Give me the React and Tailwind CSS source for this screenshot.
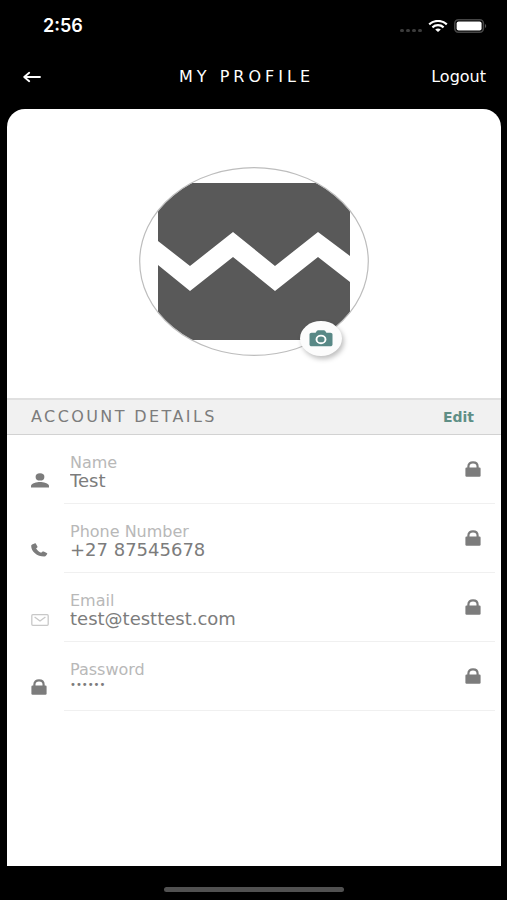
const BackIcon = () => (
  <svg viewBox="0 0 18 12" className="h-3 w-[18px]" fill="none" stroke="currentColor" strokeWidth="1.8" strokeLinecap="round" strokeLinejoin="round">
    <path d="M17 6H1.6M6.2 1.8 1.2 6l5 4.2" />
  </svg>
);

const WifiIcon = () => (
  <svg viewBox="0 0 20 12" className="h-3 w-5" fill="none" stroke="currentColor" strokeWidth="2.2">
    <path d="M1.2 4.4C6.2-.2 13.8-.2 18.8 4.4" />
    <path d="M4.4 7.3c3.2-2.8 8-2.8 11.2 0" />
    <path d="M7.2 9.4c1.6-1.3 4-1.3 5.6 0L10 12z" fill="currentColor" stroke="none" />
  </svg>
);

const BatteryIcon = () => (
  <svg viewBox="0 0 33 14" className="h-[14px] w-[33px]">
    <rect x="0.8" y="0.8" width="28.6" height="12.4" rx="3.6" fill="none" stroke="#454545" strokeWidth="1.6" />
    <rect x="2.6" y="2.4" width="25" height="9.2" rx="2" fill="#fff" />
    <path d="M31 5c1.6.6 1.6 3.4 0 4z" fill="#555" />
  </svg>
);

const PersonIcon = () => (
  <svg viewBox="0 0 18 15" className="h-[15px] w-[18px]" fill="currentColor">
    <ellipse cx="9" cy="3.9" rx="4.4" ry="3.7" />
    <path d="M0 14.6v-1.8C0 10.3 6 9 9 9s9 1.3 9 3.8v1.8z" />
  </svg>
);

const PhoneIcon = () => (
  <svg viewBox="0 0 18 14" className="h-[14px] w-[18px]" fill="currentColor">
    <path d="M1.7 1.3 3.6.4c.5-.2 1-.1 1.3.4l1.5 2.6c.3.5.1.9-.2 1.2l-1.1.9c1.2 1.9 2.8 3.2 5 4.2l1.2-.9c.4-.3.9-.4 1.4-.2l3 1.3c.6.3.8.7.5 1.2l-1.1 1.5c-.4.6-1 .8-1.8.8C6 13.4.2 8.4.2 2.9c0-.8.5-1.2 1.5-1.6z" />
  </svg>
);

const MailIcon = () => (
  <svg viewBox="0 0 18 12" className="h-3 w-[18px] text-[#c8c8c8]" fill="none" stroke="currentColor" strokeWidth="1.3" strokeLinejoin="round">
    <rect x="0.8" y="0.7" width="16.4" height="10.6" rx="1" />
    <path d="m3.6 3 5.4 4 5.4-4" />
  </svg>
);

const LockIcon = () => (
  <svg viewBox="0 0 16 16" className="h-4 w-4" fill="currentColor">
    <path d="M3.4 8V5.6C3.4 2.9 5.3 1.3 8 1.3s4.6 1.6 4.6 4.3V8" fill="none" stroke="currentColor" strokeWidth="2.2" />
    <rect x="0.4" y="6.6" width="15.2" height="9.2" rx="1.2" />
  </svg>
);

const CameraIcon = () => (
  <svg viewBox="0 0 24 17" className="h-[17px] w-6">
    <path d="M2.6 2.7h4l1.3-1.9c.3-.4.7-.6 1.2-.6h5.8c.5 0 .9.2 1.2.6l1.3 1.9h4c1.2 0 2.1.8 2.1 1.8v10c0 1-.9 1.8-2.1 1.8H2.6c-1.2 0-2.1-.8-2.1-1.8v-10c0-1 .9-1.8 2.1-1.8z" fill="#588886" />
    <ellipse cx="12" cy="9.4" rx="4.5" ry="3.8" fill="none" stroke="#fff" strokeWidth="1.9" />
  </svg>
);

const Avatar = () => (
  <svg viewBox="0 0 230 189" className="h-[189px] w-[230px]" role="img" aria-label="Profile picture">
    <defs>
      <clipPath id="avatar-clip">
        <ellipse cx="115" cy="94.5" rx="114" ry="93.5" />
      </clipPath>
    </defs>
    <g clipPath="url(#avatar-clip)" fill="#595959">
      <path d="M19 16h192v73l-32-24-43 34-42-34-43 34-32-25z" />
      <path d="M19 98l32 26 43-34 42 34 43-34 32 25v58H19z" />
    </g>
    <ellipse cx="115" cy="94.5" rx="114.3" ry="93.8" fill="none" stroke="#bdbdbd" strokeWidth="1.2" />
  </svg>
);

const fields = [
  { id: 'name', label: 'Name', value: 'Test', type: 'text', Icon: PersonIcon },
  { id: 'phone', label: 'Phone Number', value: '+27 87545678', type: 'tel', Icon: PhoneIcon },
  { id: 'email', label: 'Email', value: 'test@testtest.com', type: 'email', Icon: MailIcon },
  { id: 'password', label: 'Password', value: '******', type: 'password', Icon: LockIcon },
];

const FieldRow = ({ id, label, value, type, Icon }) => (
  <div className="flex min-h-[69px] pl-6 pr-[6px] text-[#7c7c7c]">
    <div className="flex w-[33px] items-end pb-4">
      <Icon />
    </div>
    <div className="flex flex-1 items-start border-b border-[#f0f0f0] pl-[6px] pr-[14px] pt-5">
      <div className="flex min-w-0 flex-1 flex-col">
        <label htmlFor={id} className="text-base leading-4 text-[#b8b8b8]">
          {label}
        </label>
        <input
          id={id}
          type={type}
          value={value}
          readOnly
          className={`w-full bg-transparent outline-none ${type === 'password' ? 'h-3 text-[10px]' : 'h-5 text-lg'}`}
        />
      </div>
      <span className="pt-[6px]">
        <LockIcon />
      </span>
    </div>
  </div>
);

export default function App() {
  return (
    <div className="flex min-h-screen flex-col bg-black font-['DejaVu_Sans',sans-serif]">
      <div className="flex h-[52px] items-center justify-between pl-[43px] pr-5 text-white">
        <span className="font-['Inter',sans-serif] text-lg font-semibold">2:56</span>
        <div className="flex items-center gap-[6px]">
          <div className="flex gap-[2px] pt-2">
            <span className="h-[3px] w-1 rounded-sm bg-[#3c3c3c]" />
            <span className="h-[3px] w-1 rounded-sm bg-[#3c3c3c]" />
            <span className="h-[3px] w-1 rounded-sm bg-[#3c3c3c]" />
            <span className="h-[3px] w-1 rounded-sm bg-[#3c3c3c]" />
          </div>
          <WifiIcon />
          <BatteryIcon />
        </div>
      </div>

      <header className="grid h-[50px] grid-cols-[1fr_auto_1fr] items-center pl-[23px] pr-[21px] text-white">
        <button type="button" aria-label="Back" className="justify-self-start">
          <BackIcon />
        </button>
        <h1 className="pr-4 text-base tracking-[0.25em]">MY PROFILE</h1>
        <button type="button" className="justify-self-end text-base">
          Logout
        </button>
      </header>

      <main className="mt-[7px] mr-[6px] ml-[7px] flex-1 overflow-hidden rounded-t-[18px] bg-white">
        <div className="flex justify-center pt-[58px] pb-[42px]">
          <div className="relative">
            <Avatar />
            <button
              type="button"
              aria-label="Change picture"
              className="absolute right-[27px] bottom-0 flex h-[35px] w-[42px] items-center justify-center rounded-[50%] bg-[#fcfcfc] shadow-[2px_3px_5px_rgba(0,0,0,0.25)]"
            >
              <CameraIcon />
            </button>
          </div>
        </div>

        <section>
          <div className="flex h-[37px] items-center justify-between border-t-2 border-b border-t-[#e0e0e0] border-b-[#d2d2d2] bg-[#f1f1f1] pl-6 pr-[27px]">
            <h2 className="text-base tracking-[0.15em] text-[#7c7c7c]">ACCOUNT DETAILS</h2>
            <button type="button" className="text-sm font-bold text-[#5f8f86]">
              Edit
            </button>
          </div>
          {fields.map((field) => (
            <FieldRow key={field.id} {...field} />
          ))}
        </section>
      </main>

      <div className="flex h-[34px] items-end justify-center pb-2">
        <div className="h-[5px] w-[180px] rounded-full bg-[#515151]" />
      </div>
    </div>
  );
}
